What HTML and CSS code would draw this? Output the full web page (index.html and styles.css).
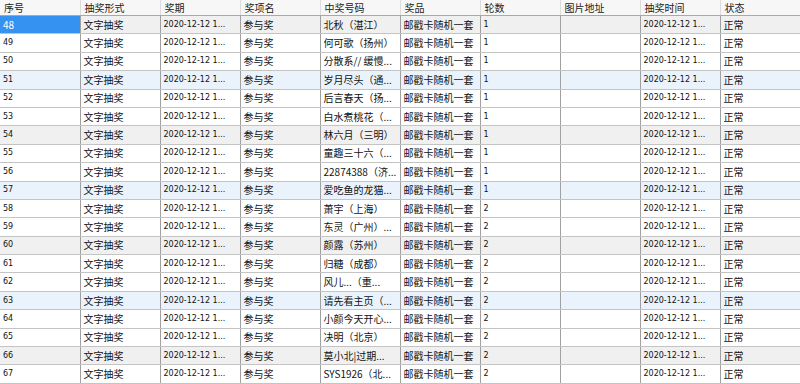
FILE: index.html
```html
<!DOCTYPE html>
<html>
<head>
<meta charset="utf-8">
<link rel="stylesheet" href="styles.css">
</head>
<body>
<table class="grid">
<colgroup>
<col class="c"><col class="c"><col class="c"><col class="c"><col class="c"><col class="c"><col class="c"><col class="c"><col class="c"><col class="c">
</colgroup>
<thead>
<tr class="head"><th>序号</th><th>抽奖形式</th><th>奖期</th><th>奖项名</th><th>中奖号码</th><th>奖品</th><th>轮数</th><th>图片地址</th><th>抽奖时间</th><th>状态</th></tr>
</thead>
<tbody>
<tr class="gray"><td class="sel">48</td><td>文字抽奖</td><td class="num">2020-12-12 1...</td><td>参与奖</td><td>北秋（湛江）</td><td>邮戳卡随机一套</td><td class="num">1</td><td></td><td class="num">2020-12-12 1...</td><td>正常</td></tr>
<tr><td class="num">49</td><td>文字抽奖</td><td class="num">2020-12-12 1...</td><td>参与奖</td><td>何可歌（扬州）</td><td>邮戳卡随机一套</td><td class="num">1</td><td></td><td class="num">2020-12-12 1...</td><td>正常</td></tr>
<tr><td class="num">50</td><td>文字抽奖</td><td class="num">2020-12-12 1...</td><td>参与奖</td><td>分散系// 缓慢...</td><td>邮戳卡随机一套</td><td class="num">1</td><td></td><td class="num">2020-12-12 1...</td><td>正常</td></tr>
<tr class="blue"><td class="num">51</td><td>文字抽奖</td><td class="num">2020-12-12 1...</td><td>参与奖</td><td>岁月尽头（通...</td><td>邮戳卡随机一套</td><td class="num">1</td><td></td><td class="num">2020-12-12 1...</td><td>正常</td></tr>
<tr><td class="num">52</td><td>文字抽奖</td><td class="num">2020-12-12 1...</td><td>参与奖</td><td>后言春天（扬...</td><td>邮戳卡随机一套</td><td class="num">1</td><td></td><td class="num">2020-12-12 1...</td><td>正常</td></tr>
<tr><td class="num">53</td><td>文字抽奖</td><td class="num">2020-12-12 1...</td><td>参与奖</td><td>白水煮桃花（...</td><td>邮戳卡随机一套</td><td class="num">1</td><td></td><td class="num">2020-12-12 1...</td><td>正常</td></tr>
<tr class="gray"><td class="num">54</td><td>文字抽奖</td><td class="num">2020-12-12 1...</td><td>参与奖</td><td>林六月（三明）</td><td>邮戳卡随机一套</td><td class="num">1</td><td></td><td class="num">2020-12-12 1...</td><td>正常</td></tr>
<tr><td class="num">55</td><td>文字抽奖</td><td class="num">2020-12-12 1...</td><td>参与奖</td><td>童趣三十六（...</td><td>邮戳卡随机一套</td><td class="num">1</td><td></td><td class="num">2020-12-12 1...</td><td>正常</td></tr>
<tr><td class="num">56</td><td>文字抽奖</td><td class="num">2020-12-12 1...</td><td>参与奖</td><td>22874388（济...</td><td>邮戳卡随机一套</td><td class="num">1</td><td></td><td class="num">2020-12-12 1...</td><td>正常</td></tr>
<tr class="blue"><td class="num">57</td><td>文字抽奖</td><td class="num">2020-12-12 1...</td><td>参与奖</td><td>爱吃鱼的龙猫...</td><td>邮戳卡随机一套</td><td class="num">1</td><td></td><td class="num">2020-12-12 1...</td><td>正常</td></tr>
<tr><td class="num">58</td><td>文字抽奖</td><td class="num">2020-12-12 1...</td><td>参与奖</td><td>萧宇（上海）</td><td>邮戳卡随机一套</td><td class="num">2</td><td></td><td class="num">2020-12-12 1...</td><td>正常</td></tr>
<tr><td class="num">59</td><td>文字抽奖</td><td class="num">2020-12-12 1...</td><td>参与奖</td><td>东灵（广州）...</td><td>邮戳卡随机一套</td><td class="num">2</td><td></td><td class="num">2020-12-12 1...</td><td>正常</td></tr>
<tr class="gray"><td class="num">60</td><td>文字抽奖</td><td class="num">2020-12-12 1...</td><td>参与奖</td><td>颜露（苏州）</td><td>邮戳卡随机一套</td><td class="num">2</td><td></td><td class="num">2020-12-12 1...</td><td>正常</td></tr>
<tr><td class="num">61</td><td>文字抽奖</td><td class="num">2020-12-12 1...</td><td>参与奖</td><td>归糖（成都）</td><td>邮戳卡随机一套</td><td class="num">2</td><td></td><td class="num">2020-12-12 1...</td><td>正常</td></tr>
<tr><td class="num">62</td><td>文字抽奖</td><td class="num">2020-12-12 1...</td><td>参与奖</td><td>风儿...（重...</td><td>邮戳卡随机一套</td><td class="num">2</td><td></td><td class="num">2020-12-12 1...</td><td>正常</td></tr>
<tr class="blue"><td class="num">63</td><td>文字抽奖</td><td class="num">2020-12-12 1...</td><td>参与奖</td><td>请先看主页（...</td><td>邮戳卡随机一套</td><td class="num">2</td><td></td><td class="num">2020-12-12 1...</td><td>正常</td></tr>
<tr><td class="num">64</td><td>文字抽奖</td><td class="num">2020-12-12 1...</td><td>参与奖</td><td>小颜今天开心...</td><td>邮戳卡随机一套</td><td class="num">2</td><td></td><td class="num">2020-12-12 1...</td><td>正常</td></tr>
<tr><td class="num">65</td><td>文字抽奖</td><td class="num">2020-12-12 1...</td><td>参与奖</td><td>决明（北京）</td><td>邮戳卡随机一套</td><td class="num">2</td><td></td><td class="num">2020-12-12 1...</td><td>正常</td></tr>
<tr class="gray"><td class="num">66</td><td>文字抽奖</td><td class="num">2020-12-12 1...</td><td>参与奖</td><td>莫小北|过期...</td><td>邮戳卡随机一套</td><td class="num">2</td><td></td><td class="num">2020-12-12 1...</td><td>正常</td></tr>
<tr><td class="num">67</td><td>文字抽奖</td><td class="num">2020-12-12 1...</td><td>参与奖</td><td>SYS1926（北...</td><td>邮戳卡随机一套</td><td class="num">2</td><td></td><td class="num">2020-12-12 1...</td><td>正常</td></tr>
</tbody>
</table>
</body>
</html>
```
FILE: styles.css
```css
html, body {
  margin: 0;
  padding: 0;
  background: #ffffff;
  overflow: hidden;
}
.grid {
  width: 800px;
  table-layout: fixed;
  border-collapse: collapse;
  font-family: "Noto Sans CJK SC", "Noto Sans", sans-serif;
  font-size: 10px;
  color: #111;
}
.c { width: 80px; }
.head th {
  height: 15px;
  padding: 0 0 0 4px;
  font-weight: normal;
  text-align: left;
  background: #f7f7f7;
  color: #222;
  border-right: 1px solid #dcdcdc;
  border-bottom: 1px solid #a8a8a8;
  line-height: 14px;
  white-space: nowrap;
  overflow: hidden;
}
td {
  height: 17.4px;
  padding: 0 0 0 3px;
  border-right: 1px solid #a0a0a0;
  border-bottom: 1px solid #c4c4c4;
  white-space: nowrap;
  overflow: hidden;
  line-height: 16px;
}
td.num {
  font-family: "DejaVu Sans", sans-serif;
  font-size: 8px;
}
tr.gray td { background: #f0f0f0; }
tr.blue td { background: #eaf3fc; }
td.sel {
  background: #3592f0 !important;
  color: #ffffff;
}
```
